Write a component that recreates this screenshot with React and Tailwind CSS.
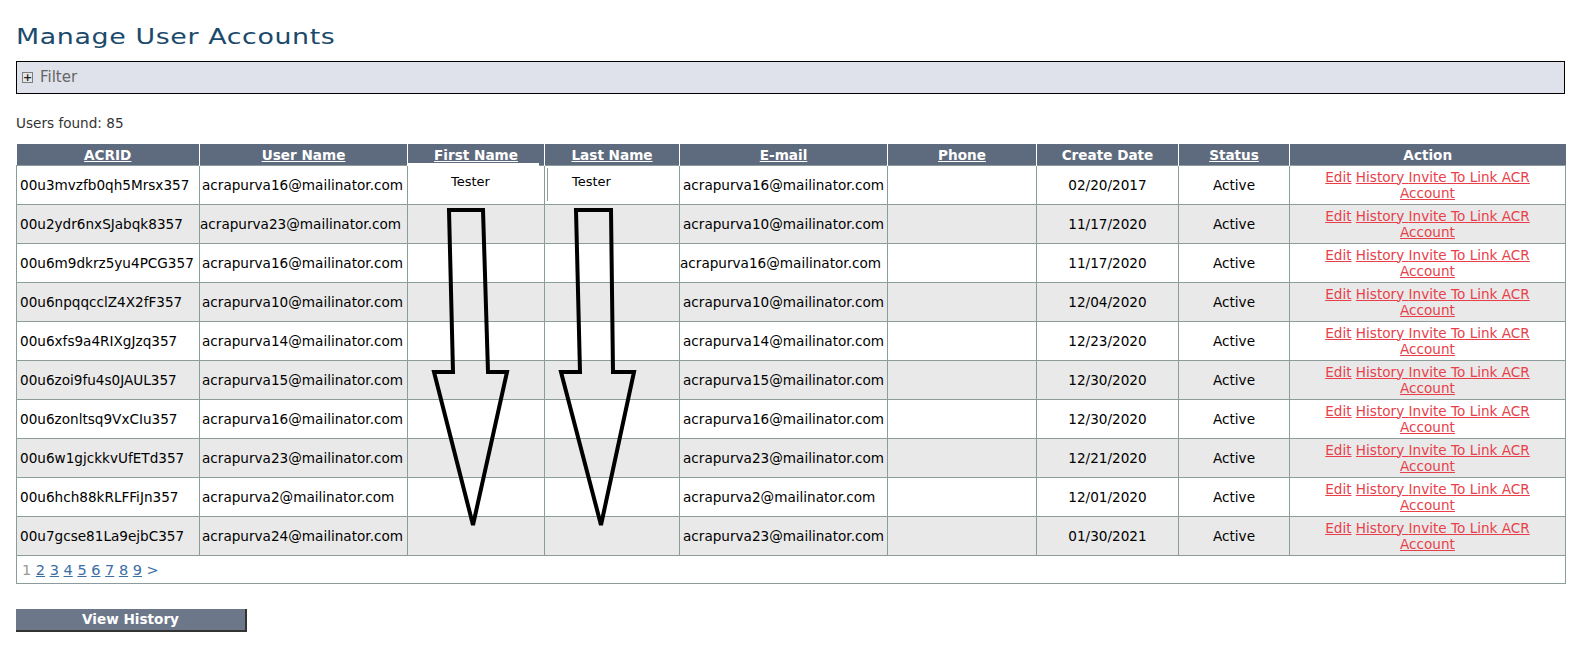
import React from 'react'

const users = [
  { id: '00u3mvzfb0qh5Mrsx357', user: 'acrapurva16@mailinator.com', email: 'acrapurva16@mailinator.com', date: '02/20/2017', tester: true },
  { id: '00u2ydr6nxSJabqk8357', user: 'acrapurva23@mailinator.com', email: 'acrapurva10@mailinator.com', date: '11/17/2020' },
  { id: '00u6m9dkrz5yu4PCG357', user: 'acrapurva16@mailinator.com', email: 'acrapurva16@mailinator.com', date: '11/17/2020' },
  { id: '00u6npqqcclZ4X2fF357', user: 'acrapurva10@mailinator.com', email: 'acrapurva10@mailinator.com', date: '12/04/2020' },
  { id: '00u6xfs9a4RIXgJzq357', user: 'acrapurva14@mailinator.com', email: 'acrapurva14@mailinator.com', date: '12/23/2020' },
  { id: '00u6zoi9fu4s0JAUL357', user: 'acrapurva15@mailinator.com', email: 'acrapurva15@mailinator.com', date: '12/30/2020' },
  { id: '00u6zonltsq9VxCIu357', user: 'acrapurva16@mailinator.com', email: 'acrapurva16@mailinator.com', date: '12/30/2020' },
  { id: '00u6w1gjckkvUfETd357', user: 'acrapurva23@mailinator.com', email: 'acrapurva23@mailinator.com', date: '12/21/2020' },
  { id: '00u6hch88kRLFFiJn357', user: 'acrapurva2@mailinator.com', email: 'acrapurva2@mailinator.com', date: '12/01/2020' },
  { id: '00u7gcse81La9ejbC357', user: 'acrapurva24@mailinator.com', email: 'acrapurva23@mailinator.com', date: '01/30/2021' },
]

const headers = [
  { label: 'ACRID', link: true, w: 'w-[183px]' },
  { label: 'User Name', link: true, w: 'w-[208px]' },
  { label: 'First Name', link: true, w: 'w-[137px]' },
  { label: 'Last Name', link: true, w: 'w-[135px]' },
  { label: 'E-mail', link: true, w: 'w-[208px]' },
  { label: 'Phone', link: true, w: 'w-[149px]' },
  { label: 'Create Date', link: false, w: 'w-[142px]' },
  { label: 'Status', link: true, w: 'w-[111px]' },
  { label: 'Action', link: false, w: 'w-[276px]' },
]

function Arrows() {
  return (
    <svg className="absolute left-0 top-0 pointer-events-none" width="700" height="400">
      <polygon
        points="433,66 467,66 472,228 491,228 457,381 418,228 437,228"
        fill="none"
        stroke="#000"
        strokeWidth="4"
        strokeLinejoin="miter"
      />
      <polygon
        points="560,66 595,66 597,228 618,228 585,381 545,228 564,228"
        fill="none"
        stroke="#000"
        strokeWidth="4"
        strokeLinejoin="miter"
      />
    </svg>
  )
}

function App() {
  return (
    <div className="w-[1592px] h-[661px] bg-white pl-4 font-['DejaVu_Sans',Verdana,sans-serif] text-[13.6px] text-black">
      <h1 className="pt-[23px] h-[49px] text-[22px] leading-[28px] font-normal text-[#1b4a6c]">
        <span className="inline-block origin-left scale-x-[1.22] tracking-[0.5px]">Manage User Accounts</span>
      </h1>

      <div className="mt-[12px] w-[1549px] h-[33px] border border-black bg-[#dfe2ea] flex items-center pl-[5px] gap-[7px]">
        <span className="w-[11px] h-[11px] border border-[#7d7d7d] bg-[#e6e6e6] flex items-center justify-center text-[11px] leading-none font-bold text-[#222]">
          +
        </span>
        <span className="text-[15px] text-[#666]">Filter</span>
      </div>

      <p className="mt-[21px] leading-[16px] text-[#333]">Users found: 85</p>

      <div className="relative mt-[13px] w-[1549px]">
        <table className="table-fixed border-collapse w-[1549px]">
          <thead>
            <tr className="h-[21px] bg-[#5e6b7e]">
              {headers.map((h, i) => (
                <th
                  key={h.label}
                  className={`${h.w} p-0 pt-[2px] text-center font-bold text-white leading-[16px] ${i < headers.length - 1 ? 'border-r border-white' : ''} ${h.link ? 'underline' : ''}`}
                >
                  {h.label}
                </th>
              ))}
            </tr>
          </thead>
          <tbody>
            {users.map((u, i) => (
              <tr key={u.id} className={`h-[39px] ${i % 2 ? 'bg-[#e9e9e9]' : 'bg-white'}`}>
                <td className="border border-[#8c9c9a] pl-[3px] pt-[1px] leading-[16px] whitespace-nowrap overflow-hidden">{u.id}</td>
                <td className={`border border-[#8c9c9a] pt-[1px] leading-[16px] whitespace-nowrap overflow-hidden ${i === 1 ? 'pl-0' : 'pl-[2px]'}`}>{u.user}</td>
                <td className="border border-[#8c9c9a] p-0 align-top">
                  {u.tester && (
                    <div className="h-[37px] bg-white pl-[43px] pt-[8px] leading-[16px] text-[13px]">Tester</div>
                  )}
                </td>
                <td className="border border-[#8c9c9a] p-0 align-top">
                  {u.tester && (
                    <div className="h-[33px] mt-[2px] ml-[2px] border-l border-[#999] pl-[24px] pt-[6px] leading-[16px] text-[13px]">Tester</div>
                  )}
                </td>
                <td className={`border border-[#8c9c9a] pt-[1px] leading-[16px] whitespace-nowrap overflow-hidden ${i === 2 ? 'pl-0' : 'pl-[3px]'}`}>{u.email}</td>
                <td className="border border-[#8c9c9a]"></td>
                <td className="border border-[#8c9c9a] pt-[1px] text-center leading-[16px]">{u.date}</td>
                <td className="border border-[#8c9c9a] pt-[1px] text-center leading-[16px]">Active</td>
                <td className="border border-[#8c9c9a] text-center leading-[16px] text-[#e8404a]">
                  <a href="#" className="underline">Edit</a>{' '}
                  <a href="#" className="underline">History </a>
                  <a href="#" className="underline">Invite To Link ACR<br />Account</a>
                </td>
              </tr>
            ))}
            <tr className="h-[28px]">
              <td colSpan={9} className="border border-[#8c9c9a] pl-[5px] pt-[2px] leading-[16px] text-[14.5px] text-[#3a6ea5]">
                <span className="text-[#999]">1</span>{' '}
                {[2, 3, 4, 5, 6, 7, 8, 9].map((n) => (
                  <React.Fragment key={n}>
                    <a href="#" className="underline">{n}</a>{' '}
                  </React.Fragment>
                ))}
                <a href="#">&gt;</a>
              </td>
            </tr>
          </tbody>
        </table>
        <div className="absolute left-[391px] top-[19px] w-[132px] h-[3px] bg-white"></div>
        <Arrows />
      </div>

      <button className="mt-[25px] w-[231px] h-[23px] bg-[#6c788a] border-r-2 border-b-2 border-[#333] text-white font-bold text-[13.6px] leading-[16px]">
        View History
      </button>
    </div>
  )
}

export default App
